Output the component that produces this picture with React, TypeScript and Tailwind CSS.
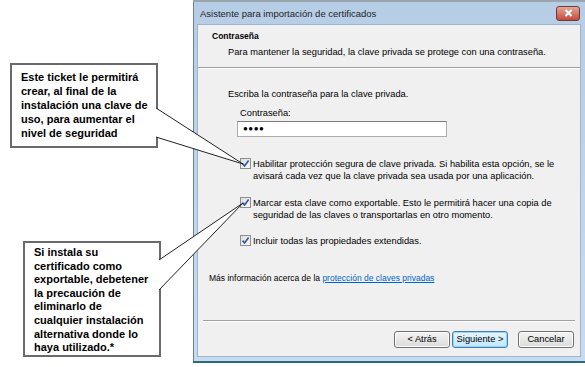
const Check = () => (
  <span className="flex h-[11px] w-[11px] shrink-0 items-center justify-center border border-[#8e8f8f] bg-gradient-to-br from-[#dcdcdc] to-[#fbfbfb]">
    <svg width="9" height="9" viewBox="0 0 9 9">
      <path d="M1.5 4.6 L3.6 7 L7.6 1.6" fill="none" stroke="#2a54a8" strokeWidth="1.6" />
    </svg>
  </span>
);

const Btn = ({ label, active }: { label: string; active?: boolean }) => (
  <button
    className={
      active
        ? "h-[17px] w-[56px] rounded-[3px] border border-[#3c7fb1] bg-gradient-to-b from-[#eaf6fd] to-[#bee6fd] text-[#000] shadow-[inset_0_0_0_1px_#9fd3f5]"
        : "h-[17px] w-[56px] rounded-[3px] border border-[#707070] bg-gradient-to-b from-[#f3f3f3] to-[#dcdcdc] text-[#000] shadow-[inset_0_0_0_1px_#fcfcfc]"
    }
  >
    {label}
  </button>
);

export default function App() {
  return (
    <div className="relative flex h-[367px] w-[585px] overflow-hidden bg-white">
      <div className="flex w-[193px] shrink-0 flex-col font-['Liberation_Sans',Arial,sans-serif] text-[11px] font-bold leading-[14px] text-black">
        <div className="ml-[10px] mt-[63px] h-[85px] w-[148px] border-2 border-[#6a6a6a] bg-white pl-[9px] pt-[5px]">
          Este ticket le permitirá
          <br />
          crear, al final de la
          <br />
          instalación una clave de
          <br />
          uso, para aumentar el
          <br />
          nivel de seguridad
        </div>
        <div className="ml-[23px] mt-[93px] h-[116px] w-[138px] border-2 border-[#6a6a6a] bg-white pl-[9px] pt-[3px] leading-[13.6px]">
          Si instala su
          <br />
          certificado como
          <br />
          exportable, debetener
          <br />
          la precaución de
          <br />
          eliminarlo de
          <br />
          cualquier instalación
          <br />
          alternativa donde lo
          <br />
          haya utilizado.*
        </div>
      </div>

      <div className="flex flex-1 flex-col font-['Liberation_Sans',Arial,sans-serif] text-[9.3px] text-black">
        <div className="h-[2px] bg-[#9aa4ad]" />
        <div className="flex flex-col border-l border-[#6f8196] bg-gradient-to-b from-[#b6cde6] to-[#c9dbee] pr-[4px] pl-[3px]">
          <div className="flex h-[22px] items-center justify-between">
            <span className="pl-[3px] pt-[2px] text-[9.5px] text-[#1e1e1e]">Asistente para importación de certificados</span>
            <span className="mr-[1px] flex h-[15px] w-[24px] items-center justify-center rounded-[3px] border border-[#6b3a36] bg-gradient-to-b from-[#e5a497] to-[#c24a3a]">
              <svg width="9" height="8" viewBox="0 0 9 8">
                <path d="M1.5 1 L7.5 7 M7.5 1 L1.5 7" stroke="#ffffff" strokeWidth="2" />
              </svg>
            </span>
          </div>
          <div className="flex h-[333px] flex-col border border-[#9fb5cc] bg-[#f0f0f0]">
            <div className="pl-[14px] pt-[5px] text-[8.5px] font-bold">Contraseña</div>
            <div className="pl-[30px] pt-[3px]">Para mantener la seguridad, la clave privada se protege con una contraseña.</div>
            <div className="mt-[7px] h-px bg-[#a0a0a0] shadow-[0_1px_0_#ffffff]" />

            <div className="pl-[30px] pt-[20px]">Escriba la contraseña para la clave privada.</div>
            <div className="pl-[42px] pt-[5px]">Contraseña:</div>
            <div className="ml-[39px] flex h-[16px] w-[210px] items-center border border-[#abadb3] border-t-[#7a7a7a] bg-white pl-[5px] text-[8px] tracking-[0.5px]">
              ●●●●
            </div>

            <div className="ml-[42px] mt-[21px] flex gap-[2px]">
              <Check />
              <div className="leading-[12px]">
                Habilitar protección segura de clave privada. Si habilita esta opción, se le
                <br />
                avisará cada vez que la clave privada sea usada por una aplicación.
              </div>
            </div>
            <div className="ml-[42px] mt-[15px] flex gap-[2px]">
              <Check />
              <div className="leading-[12px]">
                Marcar esta clave como exportable. Esto le permitirá hacer una copia de
                <br />
                seguridad de las claves o transportarlas en otro momento.
              </div>
            </div>
            <div className="ml-[42px] mt-[14px] flex gap-[2px]">
              <Check />
              <div className="leading-[12px]">Incluir todas las propiedades extendidas.</div>
            </div>

            <div className="pl-[11px] pt-[25px] text-[8.5px]">
              Más información acerca de la <span className="text-[#0066cc] underline">protección de claves privadas</span>
            </div>

            <div className="mx-[5px] mt-[36px] h-px bg-[#a0a0a0] shadow-[0_1px_0_#ffffff]" />
            <div className="flex justify-end gap-[2px] pr-[6px] pt-[10px]">
              <Btn label="< Atrás" />
              <Btn label="Siguiente >" active />
              <div className="w-[6px]" />
              <Btn label="Cancelar" />
            </div>
          </div>
          <div className="h-[4px]" />
        </div>
        <div className="h-[2px] bg-[#2b6a84]" />
        <div className="flex-1 bg-white" />
      </div>

      <svg className="pointer-events-none absolute left-0 top-0" width="585" height="367">
        <polygon points="156,108 243,164 156,137" fill="#ffffff" />
        <polyline points="156,108 243,164 156,137" fill="none" stroke="#222" strokeWidth="1" />
        <polygon points="159,260 243,203 159,290" fill="#ffffff" />
        <polyline points="159,260 243,203 159,290" fill="none" stroke="#222" strokeWidth="1" />
      </svg>
    </div>
  );
}
